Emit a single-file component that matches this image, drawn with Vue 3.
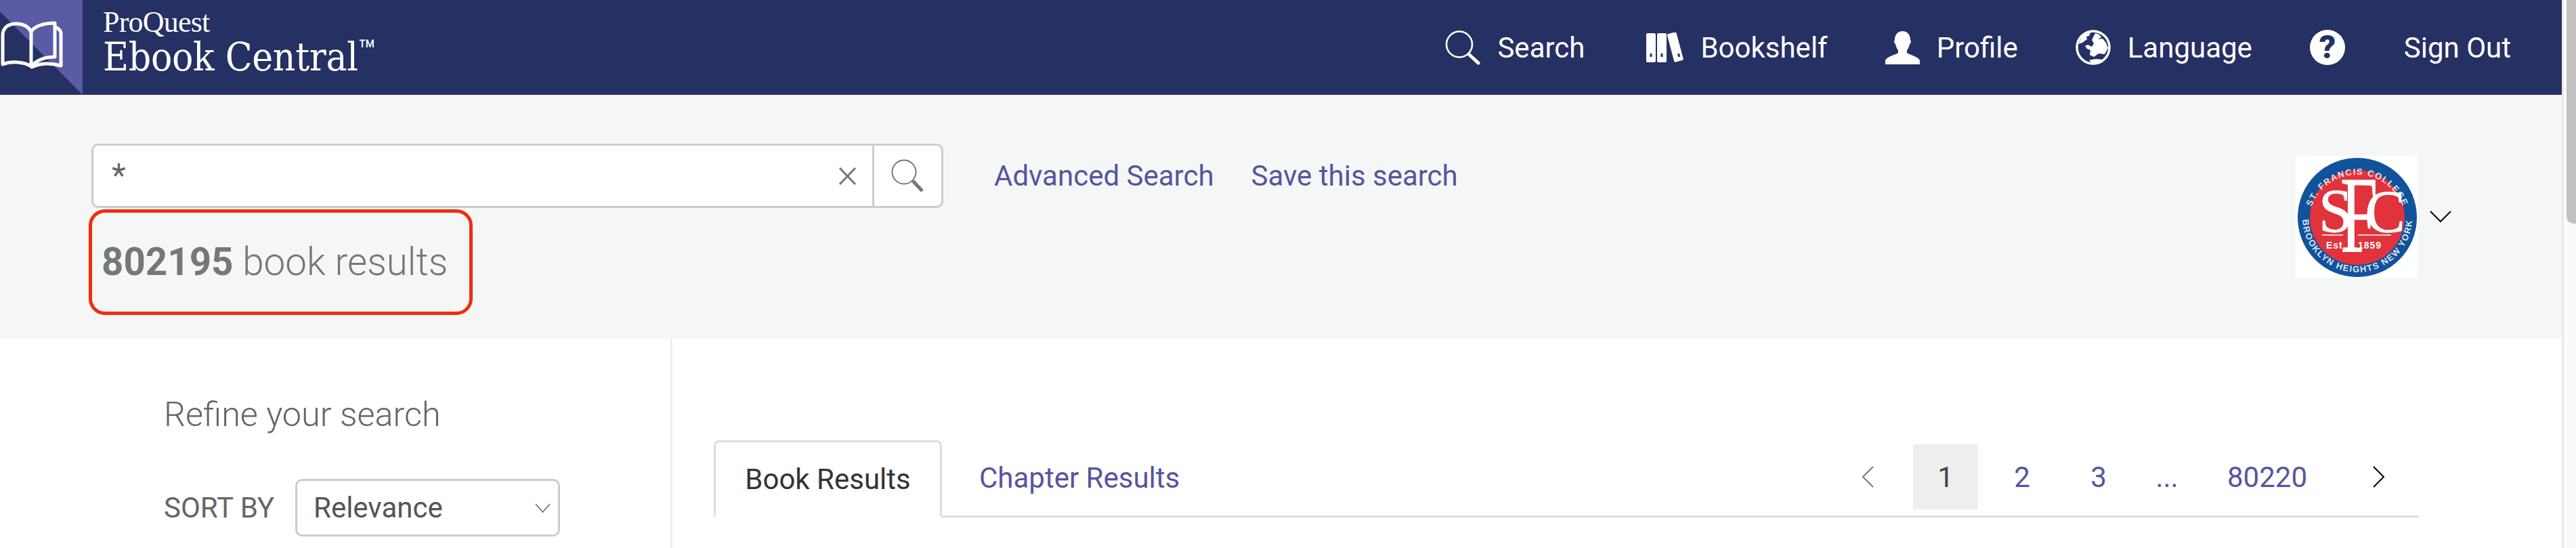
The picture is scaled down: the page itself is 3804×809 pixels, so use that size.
<script setup>
const navItems = [
  { id: 'search', label: 'Search', width: 53, height: 51, gap: 24, after: 91 },
  { id: 'shelf', label: 'Bookshelf', width: 59, height: 45, gap: 21, after: 85 },
  { id: 'profile', label: 'Profile', width: 51, height: 49, gap: 25, after: 85 },
  { id: 'globe', label: 'Language', width: 52, height: 52, gap: 25, after: 85 },
]
const pages = [
  { label: '1', kind: 'active' },
  { label: '2', kind: 'num' },
  { label: '3', kind: 'num' },
  { label: '...', kind: 'dots' },
  { label: '80220', kind: 'last' },
]
</script>

<template>
  <div class="page">
    <div class="content">
      <header class="topbar">
        <div class="brand">
          <div class="brand-mark">
            <svg class="brand-svg" viewBox="0 0 122 140" width="122" height="140">
              <rect width="122" height="140" fill="#5a5aa5" />
              <polygon points="0,17 122,140 0,140" fill="#253063" />
              <g fill="none" stroke="#fff" stroke-width="5" stroke-linejoin="round" stroke-linecap="round">
                <path d="M4 95 V52 C4 41 12 35 24 35 C34 35 42 39 46 47 V98 C36 91 16 90 4 95 Z" />
                <path d="M46 47 C50 39 64 34 81 34 V84 C66 84 54 89 46 98" />
                <path d="M81 40 C86 41 90 45 90 50 V97 C76 93 60 93 47 99" />
              </g>
            </svg>
          </div>
          <div class="brand-text">
            <div class="brand-top">ProQuest</div>
            <div class="brand-name">Ebook Central<span class="tm">™</span></div>
          </div>
        </div>
        <nav class="nav">
          <a
            v-for="item in navItems"
            :key="item.id"
            class="nav-item"
            :style="{ gap: item.gap + 'px', marginRight: item.after + 'px' }"
          >
            <svg class="nav-icon" :width="item.width" :height="item.height" :viewBox="`0 0 ${item.width} ${item.height}`">
              <g v-if="item.id === 'search'">
                <circle cx="21" cy="20.5" r="19" fill="none" stroke="#fff" stroke-width="2.6" />
                <path d="M35 35 L49 48" stroke="#fff" stroke-width="5" stroke-linecap="round" />
              </g>
              <g v-else-if="item.id === 'shelf'" fill="#fff">
                <rect x="0" y="1" width="14" height="43" rx="2" />
                <rect x="16" y="1" width="14" height="43" rx="2" />
                <rect x="36" y="0" width="14" height="43" rx="2" transform="rotate(-15 43 22)" />
                <rect x="5.5" y="31" width="3" height="5" fill="#253063" />
                <rect x="21.5" y="31" width="3" height="5" fill="#253063" />
                <rect x="46.5" y="31" width="3" height="5" fill="#253063" transform="rotate(-15 48 33)" />
              </g>
              <path v-else-if="item.id === 'profile'" fill="#fff" d="M25.5 0 C34 0 37 7 37 13 C38.5 14 38 18 36 19 C35 24 33 27 32 28 V32 C36 35 48 37 51 43 V49 H0 V43 C3 37 15 35 19 32 V28 C18 27 16 24 15 19 C13 18 12.500 14 14 13 C14 7 17 0 25.500 0 Z" />
              <g v-else fill="#fff">
                <circle cx="26" cy="26" r="24" fill="none" stroke="#fff" stroke-width="3.500" />
                <path d="M9 11 C13 7 18 4 22 4 L20 9 L16 10 L17 14 L10 19 L4 21 Z" />
                <path d="M29 5 L35 7 L38 11 L33 14 L40 13 L45 19 L48 27 L43 36 L34 35 L27 40 L21 37 L22 30 L17 28 L14 24 L18 22 L24 25 L27 20 L24 15 Z" />
                <path d="M20 45 C26 43 34 43 40 44 L32 49 L24 49 Z" />
              </g>
            </svg>
            <span>{{ item.label }}</span>
          </a>
          <a class="nav-help"><span class="help-mark">?</span></a>
          <a class="nav-signout">Sign Out</a>
        </nav>
      </header>

      <section class="band">
        <div class="band-left">
          <div class="search-row">
            <div class="searchbox">
              <span class="query">*</span>
              <svg class="clear" width="27" height="26" viewBox="0 0 27 26">
                <path d="M2 1 L25 25 M25 1 L2 25" stroke="#777" stroke-width="3" />
              </svg>
              <div class="search-btn">
                <svg width="52" height="49" viewBox="0 0 52 49">
                  <circle cx="20" cy="19" r="17.500" fill="none" stroke="#777" stroke-width="2" />
                  <path d="M33 32 L47 47" stroke="#777" stroke-width="5" />
                </svg>
              </div>
            </div>
            <a class="link advanced">Advanced Search</a>
            <a class="link">Save this search</a>
          </div>
          <div class="results"><b>802195</b> book results</div>
        </div>
        <div class="account">
          <svg class="crest" width="180" height="180" viewBox="0 0 180 180">
            <rect width="180" height="180" fill="#fff" />
            <circle cx="91" cy="91" r="88" fill="#10539b" />
            <circle cx="91" cy="91" r="70" fill="#e0333c" />
            <defs>
              <path id="ring-top" d="M19 100 A72 72 0 0 1 163 100" />
              <path id="ring-bottom" d="M10 91 A81 81 0 0 0 172 91" />
            </defs>
            <text class="ring"><textPath href="#ring-top" startOffset="50%" text-anchor="middle">ST. FRANCIS COLLEGE</textPath></text>
            <text class="ring"><textPath href="#ring-bottom" startOffset="50%" text-anchor="middle">BROOKLYN HEIGHTS NEW YORK</textPath></text>
            <text class="crest-letter" x="34" y="112" font-size="90">S</text>
            <text class="crest-letter" x="0" y="142" font-size="160" transform="translate(66 0) scale(.62 1)">F</text>
            <text class="crest-letter" x="103" y="112" font-size="88">C</text>
            <path d="M39 117 H70 M92 117 H141" stroke="#fff" stroke-width="1.500" />
            <text class="crest-est" x="45" y="137">Est.</text>
            <text class="crest-est" x="92" y="137">1859</text>
          </svg>
          <svg class="account-caret" width="32" height="18" viewBox="0 0 32 18">
            <path d="M1 1 L16 16 L31 1" fill="none" stroke="#000" stroke-width="2" />
          </svg>
        </div>
      </section>

      <section class="lower">
        <aside class="sidebar">
          <h2 class="refine">Refine your search</h2>
          <div class="sort">
            <span class="sort-label">SORT BY</span>
            <div class="select">
              <span>Relevance</span>
              <svg width="23" height="14" viewBox="0 0 23 14">
                <path d="M1 1 L11.500 13 L22 1" fill="none" stroke="#666" stroke-width="1.500" />
              </svg>
            </div>
          </div>
        </aside>
        <main class="results-pane">
          <div class="tabs">
            <a class="tab tab-active">Book Results</a>
            <a class="tab tab-link">Chapter Results</a>
            <div class="pager">
              <svg class="prev" width="18" height="32" viewBox="0 0 18 32">
                <path d="M17 1 L2 16 L17 31" fill="none" stroke="#777" stroke-width="2" />
              </svg>
              <span v-for="p in pages" :key="p.label" class="page-item" :class="p.kind">{{ p.label }}</span>
              <svg class="next" width="18" height="32" viewBox="0 0 18 32">
                <path d="M1 1 L16 16 L1 31" fill="none" stroke="#000" stroke-width="2" />
              </svg>
            </div>
          </div>
        </main>
      </section>
    </div>
    <div class="scrollbar"><div class="thumb"></div></div>
  </div>
</template>

<style>
html, body { margin: 0; overflow: hidden; background: #fff; }
</style>

<style scoped>
.page { display: flex; width: 3804px; height: 809px; overflow: hidden; font-family: Roboto, "Liberation Sans", sans-serif; font-size: 42px; }
.content { width: 3783px; flex: none; }
.scrollbar { flex: 1; background: #fafafa; border-left: 3px solid #e8e8e8; padding-left: 4px; }
.thumb { height: 330px; background: #c1c1c1; border-radius: 0 0 0 10px; }

.topbar { height: 140px; background: #253063; display: flex; align-items: center; color: #fff; }
.brand { display: flex; align-items: flex-start; height: 100%; }
.brand-mark { width: 122px; height: 140px; }
.brand-svg { display: block; }
.brand-text { margin-left: 30px; padding-top: 10px; font-family: "Liberation Serif", serif; }
.brand-top { font-size: 44px; line-height: 46px; letter-spacing: -.8px; }
.brand-name { font-family: "DejaVu Serif Condensed", "DejaVu Serif", serif; font-size: 58px; line-height: 56px; letter-spacing: -.3px; white-space: nowrap; }
.tm { font-family: Roboto, sans-serif; font-size: 44px; line-height: 0; vertical-align: 14px; letter-spacing: 0; }

.nav { margin-left: auto; padding-right: 75px; display: flex; align-items: center; }
.nav-item { display: flex; align-items: center; }
.nav-icon { display: block; flex: none; }
.nav-help { width: 52px; height: 52px; border-radius: 50%; background: #fff; display: flex; align-items: center; justify-content: center; margin-right: 87px; }
.help-mark { color: #253063; font-weight: 900; font-size: 48px; line-height: 52px; }

.band { height: 360px; box-sizing: border-box; background: #f5f7f7; padding: 72px 163px 0 135px; display: flex; }
.search-row { display: flex; align-items: center; }
.searchbox { width: 1258px; height: 95px; box-sizing: border-box; background: #fff; border: 3px solid #ccc; border-radius: 10px; display: flex; align-items: center; }
.query { margin-left: 27px; color: #666; font-size: 48px; line-height: 60px; margin-top: -2px; }
.clear { margin-left: auto; margin-right: 23px; }
.search-btn { width: 102px; height: 100%; border-left: 3px solid #ccc; box-sizing: border-box; display: flex; align-items: center; justify-content: center; }
.link { color: #55559f; }
.advanced { margin-left: 75px; margin-right: 55px; }
.results { width: 567px; height: 156px; box-sizing: border-box; margin: 2px 0 0 -4px; border: 5px solid #f32c0c; border-radius: 24px; padding-left: 14px; display: flex; align-items: center; white-space: pre; color: #777; font-size: 56.5px; font-weight: 300; }
.results b { font-weight: 700; }
.account { margin-left: auto; margin-top: 18px; height: 180px; display: flex; align-items: center; gap: 18px; }
.crest { display: block; }
.account-caret { display: block; }
.ring { fill: #fff; opacity: .85; font-family: "Liberation Sans", sans-serif; font-size: 13px; font-weight: 700; letter-spacing: 1.500px; }
.crest-letter { fill: #fff; stroke: #fff; stroke-width: .8px; font-family: "Liberation Serif", serif; }
.crest-est { fill: #fff; font-family: "Liberation Sans", sans-serif; font-size: 14px; font-weight: 700; letter-spacing: 1px; }

.lower { display: flex; height: 309px; }
.sidebar { width: 993px; box-sizing: border-box; border-right: 3px solid #eee; padding: 82px 0 0 242px; }
.refine { margin: 0; color: #666; font-size: 50.4px; font-weight: 300; line-height: 60px; }
.sort { display: flex; align-items: center; margin-top: 65px; gap: 31px; color: #666; }
.sort-label { font-weight: 400; }
.select { width: 391px; height: 85px; box-sizing: border-box; border: 3px solid #ccc; border-radius: 10px; padding: 0 11px 0 24px; display: flex; align-items: center; justify-content: space-between; color: #555; }

.results-pane { flex: 1; padding: 150px 211px 0 61px; min-width: 0; }
.tabs { height: 114px; box-sizing: border-box; border-bottom: 3px solid #ddd; display: flex; align-items: flex-end; }
.tab { box-sizing: border-box; height: 111px; display: flex; align-items: center; }
.tab-active { width: 337px; justify-content: center; color: #333; background: #fff; border: 3px solid #ddd; border-bottom: 3px solid #fff; border-radius: 8px 8px 0 0; margin-bottom: -3px; height: 114px; }
.tab-link { margin-left: 55px; color: #55559f; }
.pager { margin-left: auto; margin-bottom: 9px; padding-right: 50px; display: flex; align-items: center; color: #55559f; height: 96px; }
.prev { margin-right: 58px; }
.next { margin-left: 70px; }
.page-item { height: 96px; display: flex; align-items: center; justify-content: center; }
.active { width: 96px; background: #eee; color: #444; margin-right: 17px; }
.num { width: 96px; margin-right: 17px; }
.dots { width: 72px; margin-right: 26px; }
.last { width: 172px; }
</style>
